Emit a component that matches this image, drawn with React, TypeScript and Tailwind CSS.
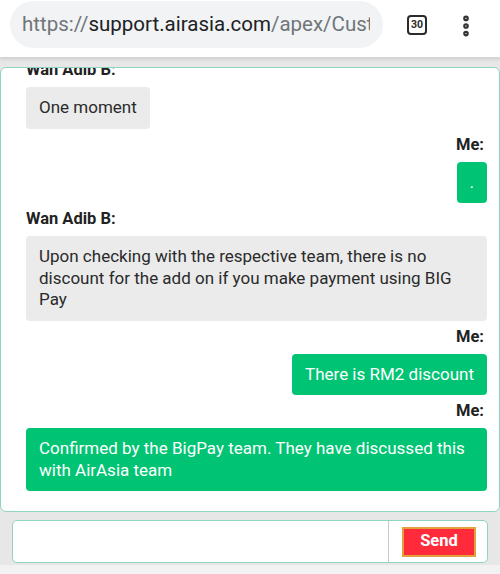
import { EllipsisVertical } from 'lucide-react';

type Msg = { from: 'agent' | 'me'; text: string };

const messages: Msg[] = [
  { from: 'agent', text: 'One moment' },
  { from: 'me', text: '.' },
  {
    from: 'agent',
    text: 'Upon checking with the respective team, there is no discount for the add on if you make payment using BIG Pay',
  },
  { from: 'me', text: 'There is RM2 discount' },
  { from: 'me', text: 'Confirmed by the BigPay team. They have discussed this with AirAsia team' },
];

function Message({ msg }: { msg: Msg }) {
  const mine = msg.from === 'me';
  return (
    <div className={`mt-[5px] flex flex-col ${mine ? 'items-end' : 'items-start'}`}>
      <div className={`h-[22px] leading-[22px] text-[16.5px] font-bold text-[#222] ${mine ? 'pr-[3px]' : ''}`}>
        {mine ? 'Me:' : 'Wan Adib B:'}
      </div>
      <div
        className={`mt-[6px] rounded-[4px] px-[13px] py-[10px] text-[17px] leading-[21.5px] ${
          mine ? 'bg-[#00c473] text-white' : 'bg-[#ebebeb] text-[#2a2a2a]'
        }`}
      >
        {msg.text}
      </div>
    </div>
  );
}

export default function App() {
  return (
    <div className="w-[500px] h-[574px] bg-[#e7e7e7] flex flex-col overflow-hidden font-['Roboto','Liberation_Sans',sans-serif]">
      {/* browser bar */}
      <div className="h-[57px] bg-white flex items-start shadow-[0_2px_4px_rgba(0,0,0,0.12)] z-10">
        <div className="ml-[10px] mt-[1px] h-[47px] w-[373px] shrink-0 rounded-full bg-[#f1f3f4] flex items-center pl-[12px] pr-[13px]">
          <div className="min-w-0 overflow-hidden whitespace-nowrap text-[20.5px]">
            <span className="text-[#70757a]">https://</span>
            <span className="text-[#202124]">support.airasia.com</span>
            <span className="text-[#70757a]">/apex/Custor</span>
          </div>
        </div>
        <div className="ml-[24px] mt-[15px] w-[20px] h-[20px] shrink-0 rounded-[4px] border-[2px] border-[#2b2b2b] flex items-center justify-center text-[10.5px] font-bold text-[#2b2b2b] leading-none">
          30
        </div>
        <div className="ml-[26px] mt-[13px] text-[#333]">
          <EllipsisVertical size={26} strokeWidth={3.2} />
        </div>
      </div>

      {/* chat panel */}
      <div className="mt-[10px] h-[445px] border border-[#8fd3c2] rounded-[6px] bg-white overflow-hidden pl-[25px] pr-[12px]">
        <div className="-mt-[14px]">
          {messages.map((m, i) => (
            <Message key={i} msg={m} />
          ))}
        </div>
      </div>

      {/* input */}
      <div className="mt-[8px] mx-[12px] h-[43px] border border-[#8fd3c2] rounded-[5px] bg-white flex">
        <div className="flex-1" />
        <div className="w-[99px] border-l border-[#c8c8c8] flex items-center pl-[13px]">
          <button className="w-[74px] h-[30px] bg-[#ff2b3b] border-[2px] border-[#e3a13c] text-white font-bold text-[16.5px] leading-none">
            Send
          </button>
        </div>
      </div>
      <div className="mt-[2px] flex-1 bg-[#f2f2f2]" />
    </div>
  );
}
